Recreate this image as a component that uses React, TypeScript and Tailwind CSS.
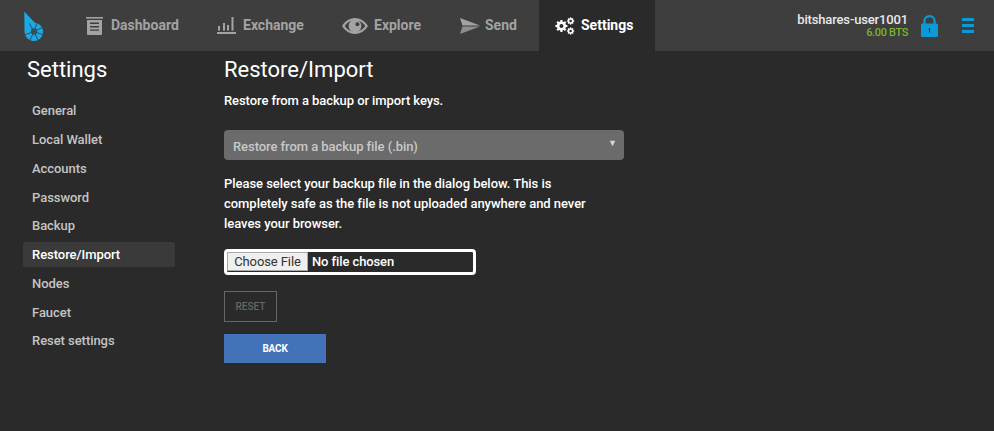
import type { ReactNode } from 'react';

const sideItems = [
  'General',
  'Local Wallet',
  'Accounts',
  'Password',
  'Backup',
  'Restore/Import',
  'Nodes',
  'Faucet',
  'Reset settings',
];

function Logo() {
  const spokes = [-30, 20, 65, 110, 155, 205, 250];
  return (
    <svg width="20" height="30" viewBox="0 0 20 30">
      <path fill="#1ba9e6" d="M0.3 0.5 L10.5 11.5 A9.3 9.3 0 1 1 0.5 20.5 Z" />
      {spokes.map((a) => (
        <line
          key={a}
          x1="10"
          y1="20.5"
          x2="10"
          y2="11"
          stroke="#3e3e3e"
          strokeWidth="0.8"
          transform={`rotate(${a} 10 20.5)`}
        />
      ))}
      <circle cx="10" cy="20.5" r="3.2" fill="#33525f" />
    </svg>
  );
}

function DashboardIcon() {
  return (
    <svg width="17" height="18" viewBox="0 0 17 18" fill="currentColor">
      <rect x="0" y="0" width="17" height="1.6" />
      <path d="M1 3 H16 V17 a1 1 0 0 1 -1 1 H2 a1 1 0 0 1 -1 -1 Z M4 5.5 V7 H13 V5.5 Z M4 9 V10.4 H13 V9 Z M4 12.4 V13.8 H13 V12.4 Z" fillRule="evenodd" />
    </svg>
  );
}

function ExchangeIcon() {
  return (
    <svg width="19" height="17" viewBox="0 0 19 17" fill="currentColor">
      <rect x="1" y="9" width="2" height="4.6" />
      <rect x="6" y="6" width="2" height="7.6" />
      <rect x="10" y="8" width="2" height="5.6" />
      <rect x="14.5" y="0" width="2" height="13.6" />
      <rect x="0" y="15" width="19" height="2" />
    </svg>
  );
}

function EyeIcon() {
  return (
    <svg width="26" height="16" viewBox="0 0 26 16" fill="currentColor">
      <path
        fillRule="evenodd"
        d="M13 0 C19 0 23.6 4 26 8 C23.6 12 19 16 13 16 C7 16 2.4 12 0 8 C2.4 4 7 0 13 0 Z M13 2.2 C8.6 2.2 5 4.6 2.8 8 C5 11.4 8.6 13.8 13 13.8 C17.4 13.8 21 11.4 23.2 8 C21 4.6 17.4 2.2 13 2.2 Z"
      />
      <path
        fillRule="evenodd"
        d="M13 1.6 A6.4 6.4 0 1 1 12.99 1.6 Z M15.4 4.2 A2 2 0 1 0 15.41 4.2 Z"
      />
    </svg>
  );
}

function SendIcon() {
  return (
    <svg width="20" height="16" viewBox="0 0 20 16" fill="currentColor">
      <path d="M0 0 L20 7.6 L2.5 7.6 Z" />
      <path d="M0 16 L20 8.6 L2.5 8.6 Z" opacity="0.8" />
    </svg>
  );
}

function Gear({ cx, cy, r, hole }: { cx: number; cy: number; r: number; hole: number }) {
  const teeth = [0, 45, 90, 135];
  return (
    <g>
      {teeth.map((a) => (
        <rect
          key={a}
          x={cx - r * 0.24}
          y={cy - r * 1.3}
          width={r * 0.48}
          height={r * 2.6}
          transform={`rotate(${a} ${cx} ${cy})`}
          fill="currentColor"
        />
      ))}
      <circle cx={cx} cy={cy} r={r} fill="currentColor" />
      <circle cx={cx} cy={cy} r={hole} fill="#2a2a2a" />
    </g>
  );
}

function CogsIcon() {
  return (
    <svg width="20" height="18" viewBox="0 0 20 18">
      <Gear cx={6.4} cy={9} r={4.6} hole={2} />
      <Gear cx={15.6} cy={4} r={2.8} hole={1.3} />
      <Gear cx={15.6} cy={14} r={2.8} hole={1.3} />
    </svg>
  );
}

function LockIcon() {
  return (
    <svg width="17" height="22" viewBox="0 0 17 22">
      <path d="M3.4 10 V6 a5.1 4.8 0 0 1 10.2 0 V10" fill="none" stroke="#0a9bd6" strokeWidth="2.2" />
      <rect x="0" y="8.5" width="17" height="13.5" rx="1.6" fill="#0a9bd6" />
      <rect x="8" y="14" width="1" height="3.6" fill="#1a3a4a" />
      <circle cx="8.5" cy="14" r="0.9" fill="#1a3a4a" />
    </svg>
  );
}

function NavItem({
  icon,
  label,
  className,
  active,
}: {
  icon: ReactNode;
  label: string;
  className: string;
  active?: boolean;
}) {
  return (
    <a
      className={`flex h-full items-center pl-4 text-[14px] font-bold ${className} ${
        active ? 'bg-[#2a2a2a] text-white' : 'text-[#a3a3a3]'
      }`}
    >
      {icon}
      <span>{label}</span>
    </a>
  );
}

export default function App() {
  return (
    <div className="h-[431px] w-[994px] overflow-hidden bg-[#2a2a2a] font-['Roboto',sans-serif] text-white">
      {/* Header */}
      <div className="flex h-[51px] items-center bg-[#3e3e3e]">
        <div className="flex w-[70px] justify-center pr-[2px]">
          <Logo />
        </div>
        <nav className="flex h-full">
          <NavItem icon={<DashboardIcon />} label="Dashboard" className="w-[131px] gap-[8px]" />
          <NavItem icon={<ExchangeIcon />} label="Exchange" className="w-[125px] gap-[7px]" />
          <NavItem icon={<EyeIcon />} label="Explore" className="w-[118px] gap-[6px]" />
          <NavItem icon={<SendIcon />} label="Send" className="w-[95px] gap-[5px]" />
          <NavItem icon={<CogsIcon />} label="Settings" className="w-[116px] gap-[6px]" active />
        </nav>
        <div className="ml-auto flex items-center pr-5">
          <div className="flex flex-col items-end">
            <span className="text-[13px] font-medium leading-[14px] tracking-[-0.15px] text-[#e8e8e8]">
              bitshares-user1001
            </span>
            <span className="text-[11px] font-medium leading-[12px] tracking-[-0.35px] text-[#79b62a]">6.00 BTS</span>
          </div>
          <div className="ml-[13px]">
            <LockIcon />
          </div>
          <div className="ml-[24px] flex w-3 flex-col gap-[3px]">
            <span className="h-[3px] bg-[#0a9bd6]" />
            <span className="h-[3px] bg-[#0a9bd6]" />
            <span className="h-[3px] bg-[#0a9bd6]" />
          </div>
        </div>
      </div>

      <div className="flex">
        {/* Sidebar */}
        <div className="w-[224px] pl-[23px] pt-px">
          <h2 className="pl-1 text-[22px] font-normal leading-[36px]">Settings</h2>
          <ul className="mt-[10.5px] w-[152px]">
            {sideItems.map((item) => (
              <li
                key={item}
                className={
                  item === 'Restore/Import'
                    ? 'mb-[3.75px] flex h-[25px] items-center rounded-[2px] bg-[#3a3a3a] pl-[9px] text-[13px] font-medium tracking-[-0.05px] text-white'
                    : 'mb-[3.75px] flex h-[25px] items-center pl-[9px] text-[13px] font-medium tracking-[-0.05px] text-[#c4c4c4]'
                }
              >
                {item}
              </li>
            ))}
          </ul>
        </div>

        {/* Content */}
        <div className="w-[400px] pt-px">
          <h3 className="text-[22px] font-normal leading-[36px]">Restore/Import</h3>
          <p className="mt-[3px] text-[13px] font-medium leading-[20px] tracking-[-0.08px]">
            Restore from a backup or import keys.
          </p>
          <div className="relative mt-[19px]">
            <select className="block h-[30px] w-full appearance-none rounded-[4px] bg-[#6b6b6b] pl-[9px] pt-[3px] text-[13px] font-medium tracking-[-0.06px] text-[#c8c8c8] outline-none">
              <option>Restore from a backup file (.bin)</option>
            </select>
            <span className="absolute right-[7px] top-[8px] text-[9px] leading-[10px] text-[#d8d8d8]">▼</span>
          </div>
          <p className="mt-[14px] w-[370px] text-[13px] font-medium leading-[20px] tracking-[-0.04px]">
            Please select your backup file in the dialog below. This is completely safe as the file is not uploaded
            anywhere and never leaves your browser.
          </p>
          <input
            type="file"
            className="mt-[15px] block h-[26px] w-[252px] rounded-[4px] border-[3px] border-white bg-[#2a2a2a] text-[13px] font-medium leading-[18px] tracking-[-0.1px] text-white file:mr-[4px] file:h-[19px] file:w-[81px] file:border file:border-[#a8a8a8] file:bg-[#efefef] file:p-0 file:text-[13px] file:font-normal file:text-[#333]"
          />
          <button className="mt-[16px] block h-[31px] w-[53px] border border-[#666] text-[10px] font-medium text-[#666]">
            RESET
          </button>
          <button className="mt-[12px] block h-[29px] w-[102px] bg-[#4272b8] text-[10px] font-bold tracking-[-0.2px] text-white">
            BACK
          </button>
        </div>
      </div>
    </div>
  );
}
